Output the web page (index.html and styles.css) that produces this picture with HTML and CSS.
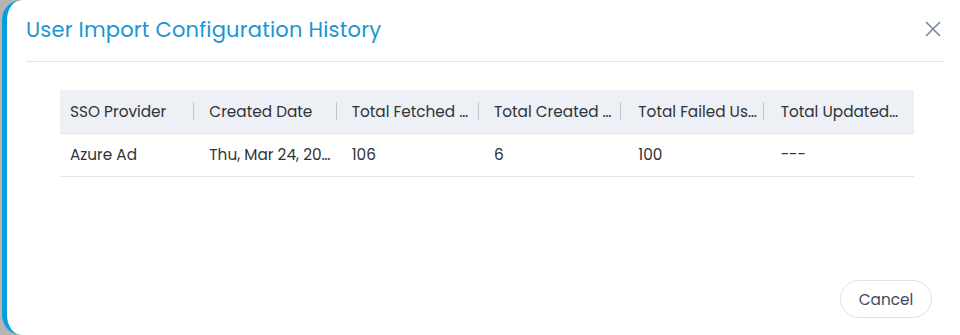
FILE: index.html
```html
<!DOCTYPE html>
<html lang="en">
  <head>
    <meta charset="UTF-8" />
    <meta name="viewport" content="width=device-width, initial-scale=1.0" />
    <title>User Import Configuration History</title>
    <link rel="stylesheet" href="styles.css">
  </head>
  <body>
    <div class="modal">
      <div class="modal-inner">
        <header class="modal-header">
          <h2>User Import Configuration History</h2>
          <button class="close-btn" aria-label="Close">
            <svg width="16" height="16" viewBox="0 0 16 16" fill="none">
              <path d="M1.5 1.5 14.5 14.5M14.5 1.5 1.5 14.5" stroke="#7b8a9b" stroke-width="1.7" stroke-linecap="round"/>
            </svg>
          </button>
        </header>
        <!-- History table -->
        <table class="history">
          <thead>
            <tr>
              <th>SSO Provider</th>
              <th>Created Date</th>
              <th>Total Fetched …</th>
              <th>Total Created …</th>
              <th>Total Failed Us…</th>
              <th class="last">Total Updated…</th>
            </tr>
          </thead>
          <tbody>
            <tr>
              <td>Azure Ad</td>
              <td>Thu, Mar 24, 20…</td>
              <td>106</td>
              <td>6</td>
              <td>100</td>
              <td>---</td>
            </tr>
          </tbody>
        </table>
        <footer class="modal-footer">
          <button class="btn-cancel">Cancel</button>
        </footer>
      </div>
    </div>
  </body>
</html>
```

FILE: styles.css
```css
:root {
  --brand-blue: #0a9ddc;
  --title-blue: #1b96d3;
  --text-dark: #2f3338;
  --line: #e2e5ec;
  --head-bg: #edf0f5;
}
* { box-sizing: border-box; font-family: "Poppins", "Open Sans", sans-serif; }
body {
  margin: 0;
  background: #b4b4b4;
  height: 335px;
  overflow: hidden;
}
.modal {
  margin-left: 2px;
  width: 1000px;
  height: 335px;
  background: #fff;
  border-left: 5px solid var(--brand-blue);
  border-radius: 20px;
  padding-left: 19px;
}
.modal-inner {
  width: 918px;
  height: 100%;
  display: flex;
  flex-direction: column;
}
.modal-header {
  display: flex;
  align-items: center;
  justify-content: space-between;
  height: 62px;
  border-bottom: 1px solid var(--line);
  padding-bottom: 3px;
}
.modal-header h2 {
  margin: 0;
  font-size: 21px;
  font-weight: 400;
  color: var(--title-blue);
  letter-spacing: 0.2px;
}
.close-btn {
  border: none;
  background: none;
  padding: 0;
  margin-right: 3px;
  display: flex;
  cursor: pointer;
}
.history {
  margin: 28px 0 0 34px;
  width: 854px;
  border-collapse: collapse;
  table-layout: fixed;
  font-size: 15.3px;
  color: var(--text-dark);
}
.history th, .history td {
  text-align: left;
  font-weight: 400;
  white-space: nowrap;
  overflow: hidden;
  padding: 0 8px 0 7px;
}
.history th:first-child, .history td:first-child { padding-left: 10px; }
.history th:nth-child(n+5), .history td:nth-child(n+5) { padding-left: 9px; }
.history th {
  position: relative;
  background: var(--head-bg);
  height: 43px;
  border-bottom: 1px solid var(--line);
}
.history th::after {
  content: "";
  position: absolute;
  right: 8px;
  top: 12px;
  height: 18px;
  width: 1px;
  background: #b9c7d6;
}
.history th.last::after { display: none; }
.history td {
  height: 43px;
  border-bottom: 1px solid var(--line);
}
.modal-footer {
  margin-top: auto;
  display: flex;
  justify-content: flex-end;
  padding: 0 12px 17px 0;
}
.btn-cancel {
  height: 38px;
  width: 92px;
  border: 1px solid #dbe2ec;
  border-radius: 19px;
  background: #fff;
  color: #3c4a63;
  font-size: 15.3px;
  cursor: pointer;
}
```
